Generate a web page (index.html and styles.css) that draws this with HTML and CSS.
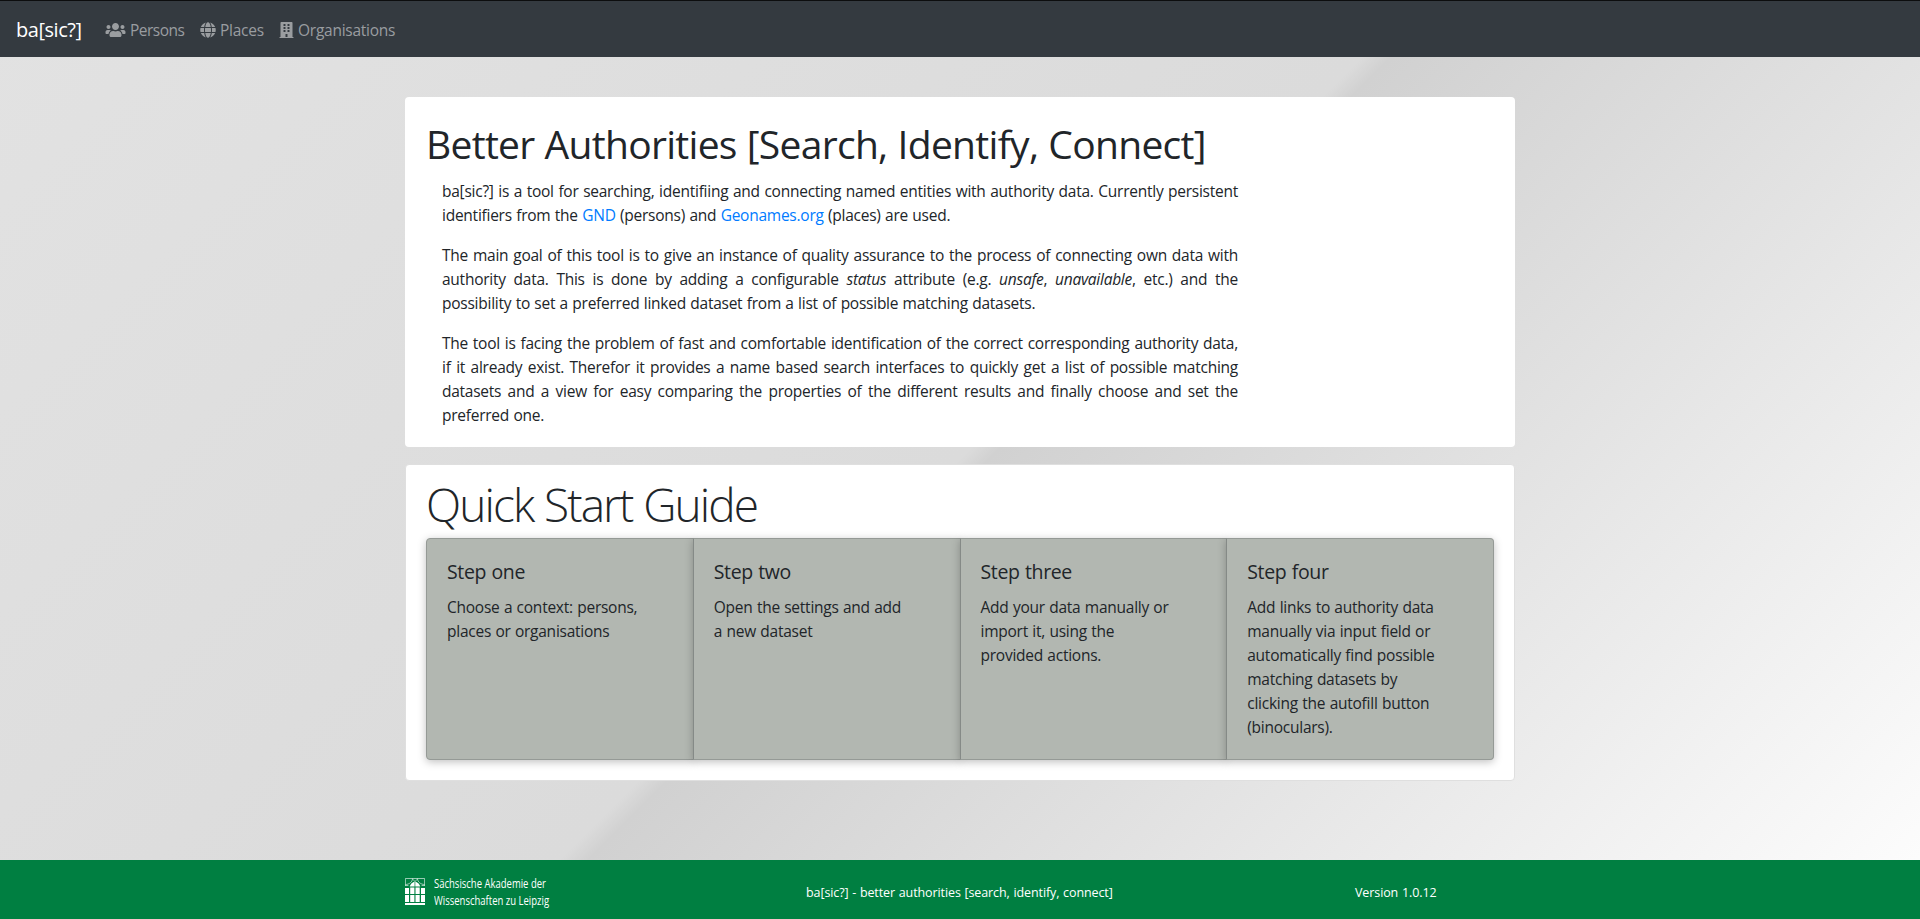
FILE: index.html
```html
<!DOCTYPE html>
<html lang="en">
<head>
<meta charset="utf-8">
<title>ba[sic?]</title>
<link rel="stylesheet" href="styles.css">
</head>
<body>
<nav class="navbar">
  <a class="brand">ba[sic?]</a>
  <a class="nav-link persons"><svg class="icon-users" viewBox="0 0 640 512"><path d="M96 224c35.3 0 64-28.7 64-64s-28.7-64-64-64-64 28.7-64 64 28.7 64 64 64zm448 0c35.3 0 64-28.7 64-64s-28.7-64-64-64-64 28.7-64 64 28.7 64 64 64zm32 32h-64c-17.6 0-33.5 7.1-45.1 18.6 40.3 22.1 68.9 62 75.1 109.4h66c17.7 0 32-14.3 32-32v-32c0-35.3-28.7-64-64-64zm-256 0c61.9 0 112-50.1 112-112S381.9 32 320 32 208 82.1 208 144s50.1 112 112 112zm76.8 32h-8.3c-20.8 10-43.9 16-68.5 16s-47.6-6-68.5-16h-8.3C179.6 288 128 339.6 128 403.2V432c0 26.5 21.5 48 48 48h288c26.5 0 48-21.5 48-48v-28.8c0-63.6-51.6-115.2-115.2-115.2zm-223.7-13.4C161.5 263.1 145.6 256 128 256H64c-35.3 0-64 28.7-64 64v32c0 17.7 14.3 32 32 32h65.9c6.3-47.4 34.9-87.3 75.2-109.4z"/></svg><span>Persons</span></a>
  <a class="nav-link places"><svg class="icon-globe" viewBox="0 0 496 512"><path d="M336.5 160C322 70.7 287.8 8 248 8s-74 62.7-88.5 152h177zM152 256c0 22.2 1.2 43.5 3.3 64h185.3c2.1-20.5 3.3-41.8 3.3-64s-1.2-43.5-3.3-64H155.3c-2.1 20.5-3.3 41.8-3.3 64zm324.7-96c-28.6-67.9-86.5-120.4-158-141.6 24.4 33.8 41.2 84.7 50 141.6h108zM177.2 18.4C105.8 39.6 47.8 92.1 19.3 160h108c8.7-56.9 25.5-107.8 49.9-141.6zM487.4 192H372.7c2.1 21 3.3 42.5 3.3 64s-1.2 43-3.3 64h114.6c5.5-20.5 8.6-41.8 8.6-64s-3.1-43.5-8.5-64zM120 256c0-21.5 1.2-43 3.3-64H8.6C3.2 212.5 0 233.8 0 256s3.2 43.5 8.6 64h114.6c-2-21-3.2-42.5-3.2-64zm39.5 96c14.5 89.3 48.7 152 88.5 152s74-62.7 88.5-152h-177zm159.3 141.6c71.4-21.2 129.4-73.7 158-141.6h-108c-8.8 56.9-25.6 107.8-50 141.6zM19.3 352c28.6 67.9 86.5 120.4 158 141.6-24.4-33.8-41.2-84.7-50-141.6h-108z"/></svg><span>Places</span></a>
  <a class="nav-link orgs"><svg class="icon-building" viewBox="0 0 448 512"><path fill-rule="evenodd" d="M436 480h-20V24c0-13-11-24-24-24H56C43 0 32 11 32 24v456H12c-7 0-12 5-12 12v20h448v-20c0-7-5-12-12-12zM128 76c0-7 5-12 12-12h40c7 0 12 5 12 12v40c0 7-5 12-12 12h-40c-7 0-12-5-12-12zM128 172c0-7 5-12 12-12h40c7 0 12 5 12 12v40c0 7-5 12-12 12h-40c-7 0-12-5-12-12zM128 268c0-7 5-12 12-12h40c7 0 12 5 12 12v40c0 7-5 12-12 12h-40c-7 0-12-5-12-12zM256 76c0-7 5-12 12-12h40c7 0 12 5 12 12v40c0 7-5 12-12 12h-40c-7 0-12-5-12-12zM256 172c0-7 5-12 12-12h40c7 0 12 5 12 12v40c0 7-5 12-12 12h-40c-7 0-12-5-12-12zM256 268c0-7 5-12 12-12h40c7 0 12 5 12 12v40c0 7-5 12-12 12h-40c-7 0-12-5-12-12zM192 480v-84c0-7 5-12 12-12h40c7 0 12 5 12 12v84z"/></svg><span>Organisations</span></a>
</nav>
<main class="container">
  <section class="card intro">
    <h1>Better Authorities [Search, Identify, Connect]</h1>
    <div class="intro-text">
      <p>ba[sic?] is a tool for searching, identifiing and connecting named entities with authority data. Currently persistent identifiers from the <a>GND</a> (persons) and <a>Geonames.org</a> (places) are used.</p>
      <p>The main goal of this tool is to give an instance of quality assurance to the process of connecting own data with authority data. This is done by adding a configurable <em>status</em> attribute (e.g. <em>unsafe</em>, <em>unavailable</em>, etc.) and the possibility to set a preferred linked dataset from a list of possible matching datasets.</p>
      <p>The tool is facing the problem of fast and comfortable identification of the correct corresponding authority data, if it already exist. Therefor it provides a name based search interfaces to quickly get a list of possible matching datasets and a view for easy comparing the properties of the different results and finally choose and set the preferred one.</p>
    </div>
  </section>
  <section class="card guide">
    <h2>Quick Start Guide</h2>
    <div class="steps">
      <div class="step"><h5>Step one</h5><p>Choose a context: persons, places or organisations</p></div>
      <div class="step"><h5>Step two</h5><p>Open the settings and add a&nbsp;new dataset</p></div>
      <div class="step"><h5>Step three</h5><p>Add your data manually or import it, using the provided actions.</p></div>
      <div class="step"><h5>Step four</h5><p>Add links to authority data manually via input field or automatically find possible matching datasets by clicking the autofill button (binoculars).</p></div>
    </div>
  </section>
</main>
<footer class="footer">
  <div class="footer-inner">
    <div class="academy">
      <svg class="window" viewBox="0 0 20 28">
        <g fill="none" stroke="#fff" stroke-width=".6"><path d="M.4 8V.5h19.200V8M.4 7.500h3M16.600 7.500h3M.5 6.500C4 6.500 7.500 4 7.500.5M19.500 6.500C16 6.500 12.500 4 12.500.5M7.500 1L10 3.500 12.500 1"/></g>
        <path fill="#fff" d="M4.800 8.500Q5.500 5 9.600 3.500V8.500zM10.300 3.500Q14.500 5 15.200 8.500H10.300zM0 10h4v6H0zM5.200 9.500h4.200v6.500H5.200zM10.500 9.500h4.200v6.500h-4.200zM16 10h4v6h-4zM0 17h4v7H0zM5.200 17h4.200v7H5.200zM10.500 17h4.200v7h-4.200zM16 17h4v7h-4zM0 25h20v2H0z"/>
      </svg>
      <span class="academy-name">Sächsische Akademie der<br>Wissenschaften zu Leipzig</span>
    </div>
    <span class="tagline">ba[sic?] - better authorities [search, identify, connect]</span>
    <span class="version">Version 1.0.12</span>
  </div>
</footer>
</body>
</html>
```
FILE: styles.css
```css
* { box-sizing: border-box; }
body {
  margin: 0;
  height: 919px;
  display: flex;
  flex-direction: column;
  overflow: hidden;
  font: 15.5px/24px "Open Sans", "Noto Sans", sans-serif;
  letter-spacing: -0.25px;
  word-spacing: 0.6px;
  color: #212529;
  background: linear-gradient(135deg, #e2e2e2 0%, #dbdbdb 50%, #d1d1d1 51%, #fefefe 100%);
}
h1, h2, h5, p { margin: 0; }
a { color: #007bff; }
.navbar {
  height: 57px;
  flex: none;
  display: flex;
  align-items: center;
  padding: 1px 16px 0;
  background: #343a40;
  border-top: 1px solid #0c0d0e;
}
.brand { width: 89px; font-size: 20px; letter-spacing: -0.45px; color: #fff; }
.nav-link { display: flex; align-items: center; gap: 4px; color: #9a9da0; white-space: nowrap; }
.nav-link svg { height: 16px; fill: currentColor; }
.persons { width: 95px; letter-spacing: -0.5px; }
.places { width: 79px; }
.icon-users { width: 21px; }
.icon-globe { width: 16px; }
.icon-building { width: 15px; }
.container { width: 1110px; margin: 40px auto 0; flex: 1; }
.card { background: #fff; border-radius: 4px; }
.intro { height: 350px; padding: 23px 21px 0; }
h1 { font-size: 39px; line-height: 48px; font-weight: 400; letter-spacing: -0.7px; white-space: nowrap; }
.intro-text { width: 796px; margin: 11px 0 0 16px; text-align: justify; }
.intro-text p { margin-bottom: 16px; }
.guide {
  height: 317px;
  margin-top: 17px;
  padding: 10px 20px 0;
  border: 1px solid #dfdfdf;
}
h2 { font-size: 46px; line-height: 58px; font-weight: 300; letter-spacing: -1.9px; white-space: nowrap; }
.steps { height: 222px; display: flex; margin-top: 5px; border-radius: 4px; }
.step {
  flex: 1;
  padding: 21px 53px 0 20px;
  background: #b2b7b1;
  border: 1px solid #959a96;
  box-shadow: 0 2px 8px rgba(0, 0, 0, .25);
}
.step + .step { border-left-color: #858a87; margin-left: -1px; }
.step:first-child { border-radius: 4px 0 0 4px; }
.step:last-child { border-radius: 0 4px 4px 0; }
h5 { font-size: 19.5px; line-height: 24px; font-weight: 400; letter-spacing: -0.35px; margin-bottom: 11px; }
.footer { height: 59px; flex: none; background: #007f41; color: #fff; }
.footer-inner {
  width: 1110px;
  height: 59px;
  margin: 0 auto;
  display: grid;
  grid-template-columns: 401px 549px 1fr;
  align-items: center;
  padding-top: 6px;
  font-size: 12.5px;
  letter-spacing: -0.1px;
  white-space: nowrap;
}
.academy { display: flex; gap: 9px; align-items: center; margin-top: -2px; }
.window { width: 20px; height: 28px; }
.academy-name { font-size: 12.5px; line-height: 17px; letter-spacing: 0; word-spacing: 0; transform: scaleX(.76); transform-origin: left; }
```
